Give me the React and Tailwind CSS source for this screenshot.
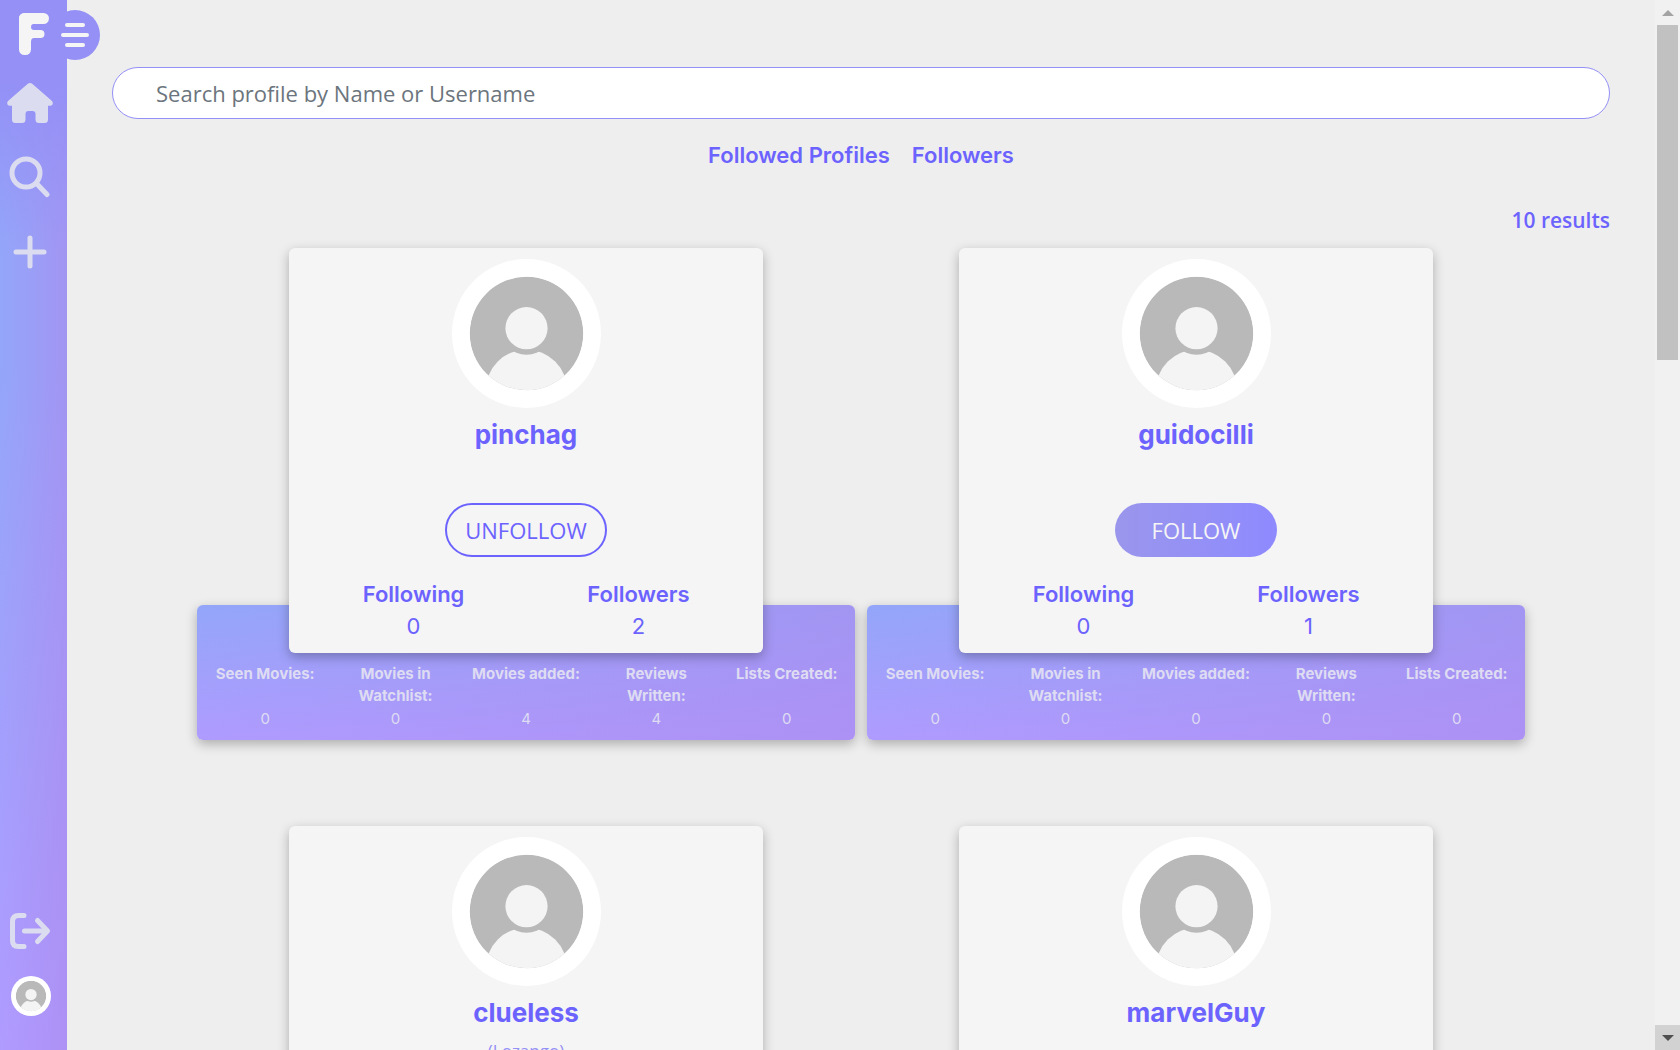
import React from "react";

const profiles = [
  { name: "pinchag", followed: true, following: 0, followers: 2, stats: [0, 0, 4, 4, 0] },
  { name: "guidocilli", followed: false, following: 0, followers: 1, stats: [0, 0, 0, 0, 0] },
  { name: "clueless", alias: "(Lozango)", followed: false, following: 0, followers: 0, stats: [0, 0, 0, 0, 0] },
  { name: "marvelGuy", followed: false, following: 0, followers: 0, stats: [0, 0, 0, 0, 0] },
];

const statLabels = ["Seen Movies:", "Movies in Watchlist:", "Movies added:", "Reviews Written:", "Lists Created:"];

function Avatar({ className, id }) {
  return (
    <svg viewBox="-74.5 -74.5 149 149" className={className} role="img" aria-label="Avatar">
      <clipPath id={id}>
        <circle r="56.7" />
      </clipPath>
      <circle r="74.5" fill="#fff" />
      <g clipPath={`url(#${id})`}>
        <circle r="57" fill="#b9b9b9" />
        <circle cy="56.7" r="40.6" fill="#f4f4f4" />
        <circle cy="-5.3" r="26.6" fill="#b9b9b9" />
        <circle cy="-5.3" r="21.1" fill="#f4f4f4" />
      </g>
    </svg>
  );
}

function Sidebar() {
  return (
    <nav
      aria-label="Main"
      className="relative z-20 flex w-[67px] shrink-0 flex-col items-center bg-[linear-gradient(to_bottom,#9490f6_0,#9490f6_80px,transparent_250px),linear-gradient(to_right,transparent,#ac8aee99),linear-gradient(to_bottom,#93a6f9,#93a6f9_35%,#b09bff)] pt-3 pr-2 pb-[34px] text-[#dcdcf0]"
    >
      <a href="#home" aria-label="Logo" className="pl-2">
        <svg width="32" height="44" viewBox="0 0 32 44" fill="#f5f5f5">
          <rect x="1" y="1" width="12" height="42" rx="5.5" />
          <rect x="1" y="1" width="30" height="11" rx="5.5" />
          <path d="M5 12h10a3 3 0 0 0-2 3a3 3 0 0 0 3 3h6.500a4 4 0 0 1 0 8H16q-3 0-3 4H5z" />
        </svg>
      </a>
      <a href="#films" aria-label="Home" className="mt-[25px]">
        <svg width="48" height="44" viewBox="0 0 48 44" fill="currentColor">
          <path d="M21.500 3q2.500-1.800 5 0L46 20q1.500 1.800.5 3.500-.7 1.200-2.500 1.200h-2V38.500q0 3.500-3.500 3.500H33q-3.500 0-3.500-3.500V33q0-3-3-3h-4q-3 0-3 3v5.500q0 3.500-3.500 3.500H9.500Q6 42 6 38.500V24.700H4q-1.800 0-2.500-1.200Q.5 21.800 2 20z" />
        </svg>
      </a>
      <a href="#search" aria-label="Search" className="mt-[29px]">
        <svg width="42" height="44" viewBox="0 0 42 44" fill="none" stroke="currentColor" strokeWidth="5" strokeLinecap="round">
          <circle cx="17" cy="19" r="14" />
          <path d="M27.500 29.500 38 40.500" />
        </svg>
      </a>
      <a href="#add" aria-label="Add" className="mt-[37px]">
        <svg width="34" height="34" viewBox="0 0 34 34" fill="none" stroke="currentColor" strokeWidth="5" strokeLinecap="round">
          <path d="M17 3v28M3 17h28" />
        </svg>
      </a>
      <a href="#logout" aria-label="Log out" className="mt-auto">
        <svg width="42" height="38" viewBox="0 0 42 38" fill="none" stroke="currentColor" strokeWidth="5" strokeLinecap="round" strokeLinejoin="round">
          <path d="M15 3.500H9.500Q3.500 3.500 3.500 9.500v19q0 6 6 6H15" />
          <path d="M15.500 19H37" />
          <path d="M28.500 8.500 38.500 19 28.500 29.500" />
        </svg>
      </a>
      <a href="#profile" aria-label="Profile" className="mt-[26px] pl-[3px]">
        <Avatar id="me" className="size-10" />
      </a>
      <button
        type="button"
        aria-label="Menu"
        className="absolute top-[10px] left-[50px] flex size-[50px] flex-col items-center justify-center gap-[6px] rounded-full bg-[#9490f6]"
      >
        <span className="h-[4px] w-[20px] rounded-full bg-[#f5f5f5]" />
        <span className="h-[4px] w-[28px] rounded-full bg-[#f5f5f5]" />
        <span className="h-[4px] w-[20px] rounded-full bg-[#f5f5f5]" />
      </button>
    </nav>
  );
}

function Profile({ profile, id }) {
  return (
    <article>
      <div className="relative z-10 mx-auto flex h-[405px] w-[72%] flex-col items-center rounded-md bg-[#f5f5f5] pt-[11px] text-[#6c63ff] shadow-[0_4px_12px_rgba(0,0,0,0.28)]">
        <Avatar id={id} className="size-[149px]" />
        <h2 className="mt-[9px] font-['Inter',sans-serif] text-[26px] leading-9 font-bold">{profile.name}</h2>
        <p className="h-[50px] pt-1 font-['Open_Sans',sans-serif] text-[17px] leading-8 text-[#9490f6]">{profile.alias}</p>
        {profile.followed ? (
          <button type="button" className="h-[54px] w-[162px] shrink-0 rounded-[27px] border-2 border-[#6c63ff] font-['Open_Sans',sans-serif] text-[22px]">
            UNFOLLOW
          </button>
        ) : (
          <button
            type="button"
            className="h-[54px] w-[162px] shrink-0 rounded-[27px] bg-linear-to-r from-[#9a96ec] to-[#8e8aff] font-['Open_Sans',sans-serif] text-[22px] text-[#f5f5f5]"
          >
            FOLLOW
          </button>
        )}
        <dl className="mt-[21px] grid w-full grid-cols-2 px-3 text-center font-['Inter',sans-serif] text-[22px] leading-8">
          <div>
            <dt className="font-semibold">Following</dt>
            <dd>{profile.following}</dd>
          </div>
          <div>
            <dt className="font-semibold">Followers</dt>
            <dd>{profile.followers}</dd>
          </div>
        </dl>
      </div>
      <dl className="-mt-12 grid h-[135px] grid-cols-5 rounded-md bg-[linear-gradient(to_right,transparent,#ac8aee99),linear-gradient(to_bottom,#93a6f9,#af9bfe)] px-[3px] pt-[58px] text-center font-['Inter',sans-serif] text-[15px] leading-[22px] text-[#dedcf2] shadow-[0_4px_12px_rgba(0,0,0,0.28)]">
        {statLabels.map((label, i) => (
          <div key={label} className="flex flex-col">
            <dt className="h-[45px] px-2 font-bold">{label}</dt>
            <dd>{profile.stats[i]}</dd>
          </div>
        ))}
      </dl>
    </article>
  );
}

export default function App() {
  return (
    <div className="flex h-screen overflow-hidden bg-[#eeeeee]">
      <Sidebar />
      <main className="min-w-0 flex-1 overflow-y-auto px-[45px] pt-[67px] [scrollbar-width:none]">
        <input
          type="search"
          aria-label="Search profile"
          placeholder="Search profile by Name or Username"
          className="h-[52px] w-full rounded-[26px] border border-[#9490f6] bg-white px-[43px] font-['Open_Sans',sans-serif] text-[22px] text-gray-700 placeholder:text-[#6c757d]"
        />
        <div className="mt-5 flex justify-center gap-[22px] font-['Inter',sans-serif] text-[22px] leading-8 font-semibold text-[#6c63ff]">
          <a href="#followed">Followed Profiles</a>
          <a href="#followers">Followers</a>
        </div>
        <p className="mt-[33px] text-right font-['Open_Sans',sans-serif] text-[21px] leading-8 font-semibold text-[#6c63ff]">10 results</p>
        <div className="mx-[85px] mt-3 mb-[86px] grid grid-cols-2 gap-x-3 gap-y-[86px]">
          {profiles.map((p, i) => (
            <Profile key={p.name} profile={p} id={`avatar-${i}`} />
          ))}
        </div>
      </main>
      <div className="flex w-[25px] shrink-0 flex-col items-center bg-[#f1f1f1]" aria-hidden="true">
        <div className="flex h-[25px] w-full items-center justify-center">
          <svg width="12" height="6" viewBox="0 0 12 6">
            <path d="M0 6h12L6 0z" fill="#a3a3a3" />
          </svg>
        </div>
        <div className="h-[335px] w-[21px] bg-[#c1c1c1]" />
        <div className="mt-auto flex h-[25px] w-full items-center justify-center bg-[#d2d2d2]">
          <svg width="12" height="6" viewBox="0 0 12 6">
            <path d="M0 0h12L6 6z" fill="#505050" />
          </svg>
        </div>
      </div>
    </div>
  );
}
